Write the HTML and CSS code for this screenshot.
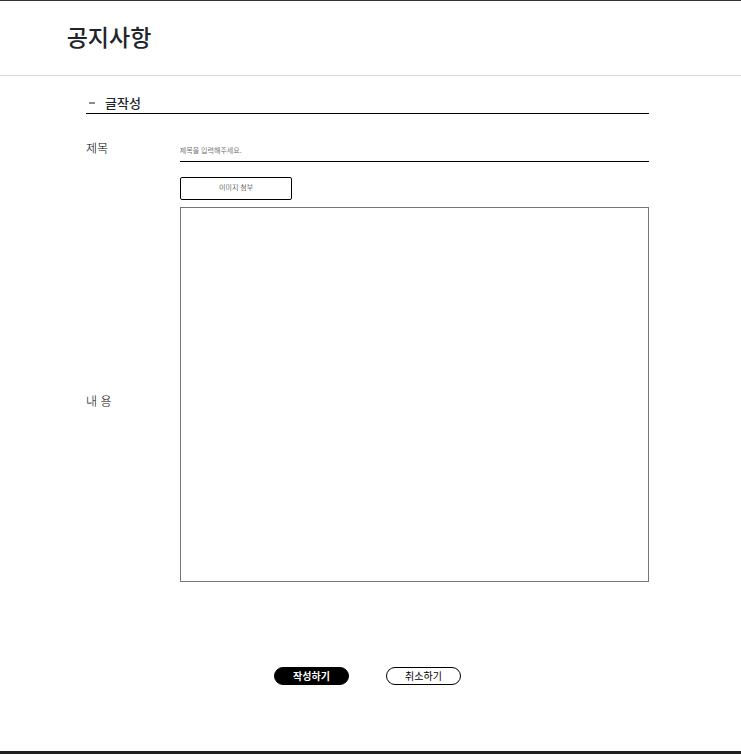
FILE: index.html
```html
<!DOCTYPE html>
<html lang="ko">
<head>
<meta charset="utf-8">
<meta name="viewport" content="width=device-width, initial-scale=1">
<title>공지사항</title>
<link rel="stylesheet" href="styles.css">
</head>
<body>
<header class="page-header"><h1 class="page-title">공지사항</h1></header>
<main class="content">
  <h2 class="section-title">
    <svg class="dash" viewBox="0 0 6 2" aria-hidden="true"><path d="M0 1H6" stroke="#8d8d8d" stroke-width="2"/></svg>
    글작성
  </h2>
  <form class="form">
    <label class="label label-title" for="title">제목</label>
    <input class="title-input" id="title" type="text" placeholder="제목을 입력해주세요.">
    <label class="label label-body" for="body">내 용</label>
    <div class="editor">
      <button class="attach" type="button">이미지 첨부</button>
      <textarea class="body-input" id="body"></textarea>
    </div>
    <div class="actions">
      <button class="action primary" type="submit">작성하기</button>
      <button class="action" type="button">취소하기</button>
    </div>
  </form>
</main>
</body>
</html>
```

FILE: styles.css
```css
* {
  box-sizing: border-box;
}

body {
  margin: 0;
  min-height: 100vh;
  border-top: 1px solid #343236;
  border-bottom: 3px solid #222122;
  background: #fff;
  color: #212529;
  font-family: "Noto Sans CJK KR", "Noto Sans", sans-serif;
}

button,
input,
textarea {
  margin: 0;
  font-family: inherit;
}

.page-header {
  padding: 18px 9% 22px;
  border-bottom: 1px solid #d8d8d8;
}

.page-title {
  margin: 0;
  font-size: 23px;
  line-height: 34px;
  font-weight: 500;
}

.content {
  padding: 18px 92px 0 86px;
}

.section-title {
  display: flex;
  align-items: center;
  gap: 10px;
  margin: 0;
  padding: 0 0 1px 3px;
  border-bottom: 1px solid #000;
  font-size: 13px;
  line-height: 18px;
  font-weight: 500;
}

.dash {
  width: 6px;
  height: 2px;
}

.form {
  display: grid;
  grid-template-columns: 1fr 5fr;
  row-gap: 15px;
  padding-top: 24px;
}

.label {
  align-self: center;
  color: #000;
  font-size: 12px;
  line-height: 20px;
  font-weight: 300;
}

.label-title {
  align-self: start;
}

.label-body {
  padding-top: 42px;
}

.title-input {
  width: 100%;
  height: 24px;
  padding: 0;
  border: 0;
  border-bottom: 1px solid #000;
  font-size: 7px;
}

.title-input::placeholder {
  color: #757575;
  opacity: 1;
}

.editor {
  display: flex;
  flex-direction: column;
  align-items: flex-start;
  gap: 7px;
}

.attach {
  width: 24%;
  height: 23px;
  padding: 0 0 4px;
  border: 1px solid #000;
  border-radius: 2px;
  background: #fff;
  color: #000;
  font-size: 7px;
  font-weight: 300;
}

.body-input {
  width: 100%;
  height: 375px;
  border: 1px solid #767676;
  resize: none;
}

.actions {
  grid-column: 1 / -1;
  display: flex;
  justify-content: center;
  gap: 37px;
  padding-top: 70px;
}

.action {
  width: 75px;
  height: 18px;
  padding: 0 0 1px;
  border: 1px solid #000;
  border-radius: 9px;
  background: #fff;
  color: #000;
  font-size: 10px;
  line-height: 14px;
}

.primary {
  background: #000;
  color: #fff;
  font-weight: 700;
}
```
